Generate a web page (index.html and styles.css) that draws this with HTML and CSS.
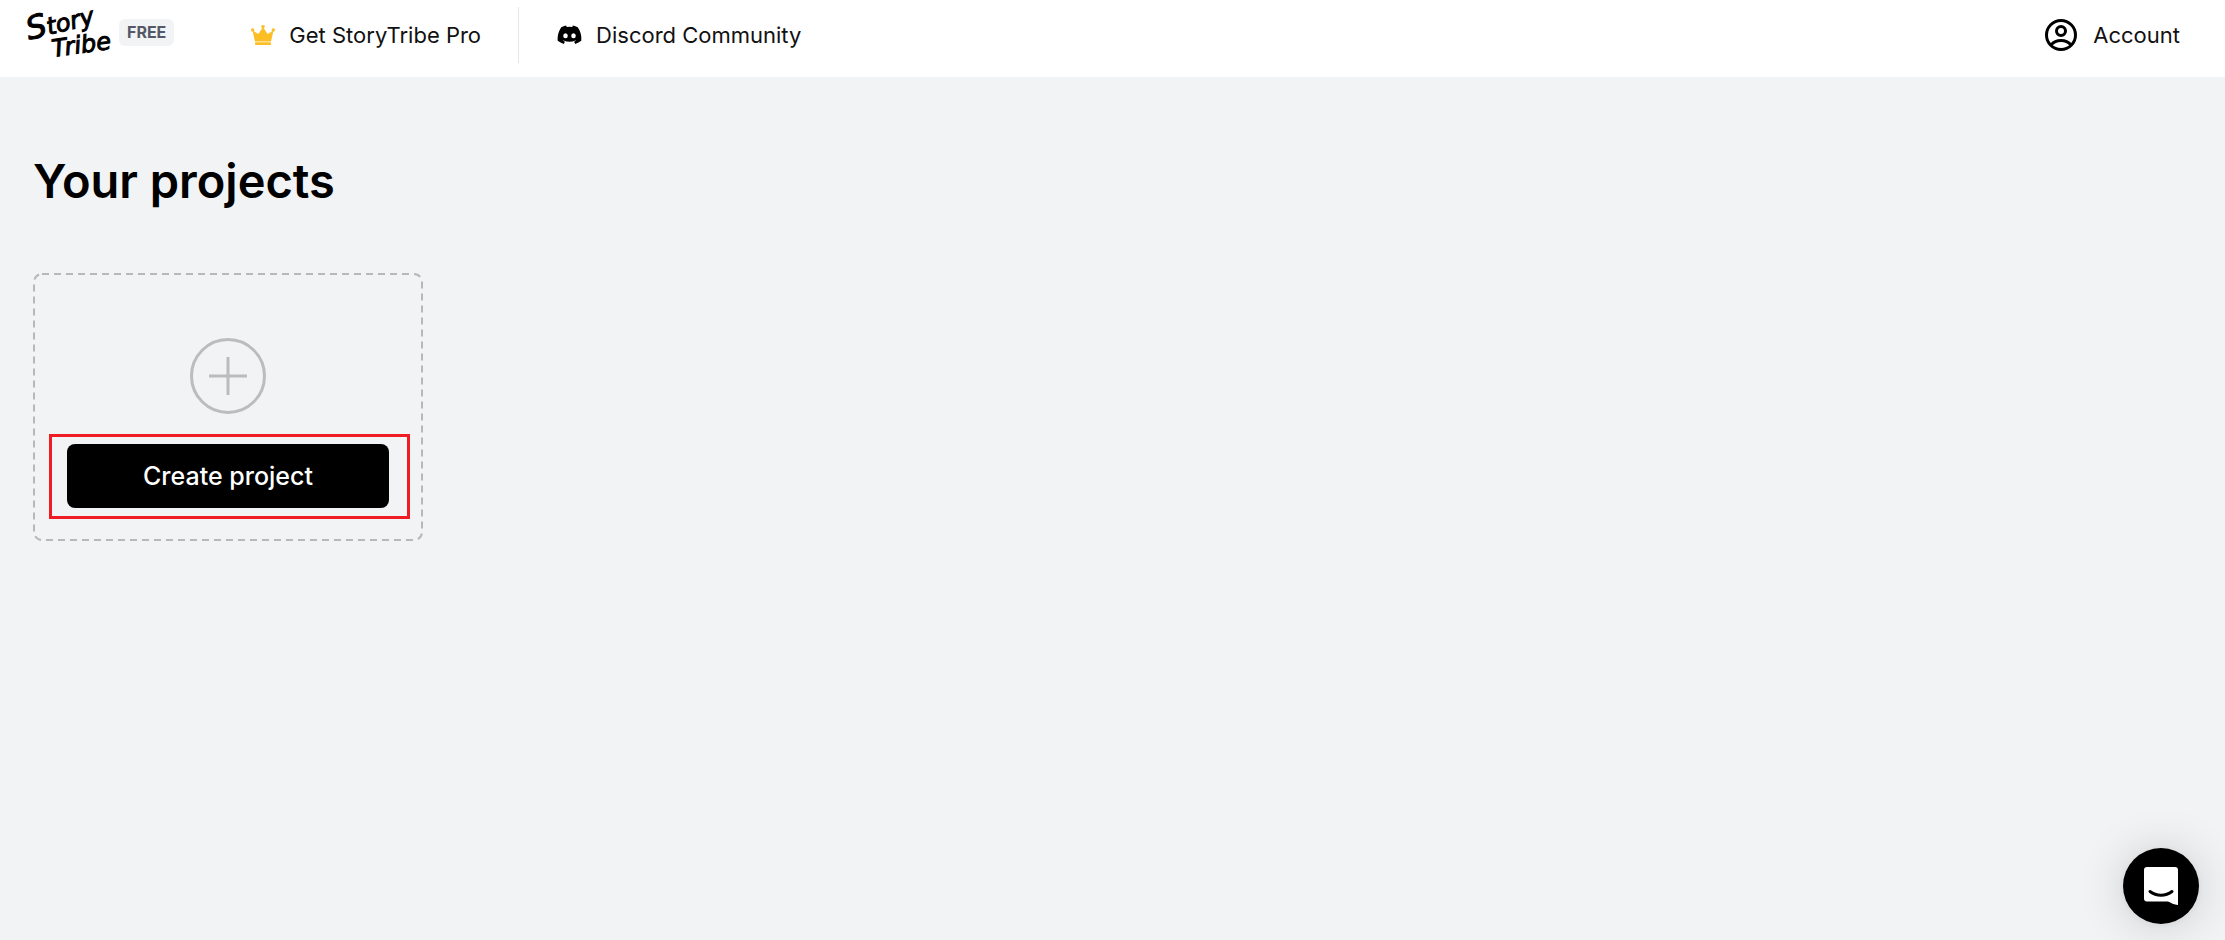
FILE: index.html
```html
<!DOCTYPE html>
<html lang="en">
<head>
<meta charset="utf-8">
<meta name="viewport" content="width=device-width, initial-scale=1">
<title>StoryTribe</title>
<link rel="stylesheet" href="styles.css">
</head>
<body>
<header class="topbar">
  <a class="brand" href="#" aria-label="Story Tribe">
    <svg class="logo" viewBox="0 0 88 56" aria-hidden="true">
      <text class="logo-word" transform="translate(3 33) rotate(-14)"><tspan class="logo-cap">S</tspan>tory</text>
      <text class="logo-word" transform="translate(27 50) rotate(-8)">Tribe</text>
    </svg>
  </a>
  <span class="badge">FREE</span>
  <nav class="links">
    <a class="link" href="#">
      <svg class="crown" viewBox="0 0 24 20" aria-hidden="true">
        <path d="M4 16.500 1.500 5.500 7.400 9 12 2 16.600 9 22.500 5.500 20 16.500Z"/>
        <circle cx="1.700" cy="5" r="1.700"/><circle cx="12" cy="1.800" r="1.800"/><circle cx="22.300" cy="5" r="1.700"/>
        <rect x="4" y="17.200" width="16" height="2.800" rx="1"/>
      </svg>
      Get StoryTribe Pro
    </a>
    <a class="link link-divided" href="#">
      <svg class="discord" viewBox="0 0 24 20" aria-hidden="true">
        <path fill-rule="evenodd" d="M20.300 2.200A19 19 0 0 0 15.400.600L14.700 2a18 18 0 0 0-5.400 0L8.600.600A19 19 0 0 0 3.700 2.200C.700 6.800-.2 11.300.200 15.800a20 20 0 0 0 6 3.100l1.300-2.200-2-.9.500-.4a14 14 0 0 0 12 0l.5.400-2 .9 1.300 2.200a20 20 0 0 0 6-3.100c.500-5.200-.9-9.700-3.500-13.600ZM8 13.200a2.300 2.500 0 1 1 0-5 2.300 2.500 0 0 1 0 5Zm8 0a2.300 2.500 0 1 1 0-5 2.300 2.500 0 0 1 0 5Z"/>
      </svg>
      Discord Community
    </a>
  </nav>
  <a class="link account" href="#">
    <svg class="user" viewBox="0 0 32 32" aria-hidden="true">
      <circle cx="16" cy="16" r="14.500"/>
      <circle cx="16" cy="12" r="4.500"/>
      <path d="M6 26c2.500-3 6-4.500 10-4.500s7.500 1.500 10 4.500"/>
    </svg>
    Account
  </a>
</header>
<main class="content">
  <h1 class="title">Your projects</h1>
  <section class="card">
    <svg class="card-frame" aria-hidden="true"><rect class="card-line" width="100%" height="100%" rx="8"/></svg>
    <svg class="plus" viewBox="0 0 76 76" aria-hidden="true">
      <circle cx="38" cy="38" r="36.500"/>
      <path d="M38 19v38M19 38h38"/>
    </svg>
    <div class="highlight">
      <button class="create" type="button">Create project</button>
    </div>
  </section>
</main>
<button class="chat" type="button" aria-label="Open chat">
  <svg class="chat-icon" viewBox="0 0 34 38" aria-hidden="true">
    <path class="chat-bubble" d="M3 0h28a3 3 0 0 1 3 3v35c-4-.5-7-2-10-3.500H3a3 3 0 0 1-3-3V3a3 3 0 0 1 3-3Z"/>
    <path class="chat-smile" d="M6 24.500c6.500 5 15.500 5 22 0"/>
  </svg>
</button>
</body>
</html>
```
FILE: styles.css
```css
* { box-sizing: border-box; }
body {
  margin: 0;
  min-height: 100vh;
  background: #f2f3f5;
  color: #000;
  font-family: Inter, "Liberation Sans", sans-serif;
}
a { color: inherit; text-decoration: none; }
button { font: inherit; border: 0; cursor: pointer; }

.topbar {
  display: flex;
  align-items: center;
  min-height: 77px;
  padding: 0 45px 8px 26px;
  background: #fff;
}
.brand { display: flex; }
.logo { width: 88px; height: 56px; overflow: visible; }
.logo-word {
  stroke: #000;
  stroke-width: 1;
  font-family: "DejaVu Sans", sans-serif;
  font-size: 24px;
  font-style: italic;
}
.logo-cap { font-size: 32px; }
.badge {
  margin: 0 77px 4px 5px;
  padding: 0 8px;
  border-radius: 6px;
  background: #f2f3f5;
  color: #555866;
  font-size: 16px;
  font-weight: 700;
  line-height: 27px;
}
.links { display: flex; }
.link {
  display: flex;
  align-items: center;
  gap: 14px;
  min-height: 56px;
  color: #111;
  font-size: 22px;
  line-height: 28px;
}
.link-divided {
  margin-left: 37px;
  padding-left: 38px;
  border-left: 1px solid #e5e7ea;
}
.crown { width: 24px; height: 20px; fill: #fbbe24; }
.discord { width: 25px; height: 20px; }
.account { gap: 16px; margin-left: auto; }
.user { width: 32px; height: 32px; fill: none; stroke: #000; stroke-width: 3; }

.content { padding: 75px 33px 32px; }
.title {
  margin: 0;
  font-size: 47px;
  font-weight: 600;
  line-height: 58px;
}
.card {
  position: relative;
  display: flex;
  flex-direction: column;
  align-items: center;
  width: 390px;
  margin-top: 63px;
  padding: 65px 13px 22px 16px;
}
.card-frame {
  position: absolute;
  inset: 1px;
  width: calc(100% - 2px);
  height: calc(100% - 2px);
  overflow: visible;
}
.card-line { fill: none; stroke: #b8b8b8; stroke-width: 2; stroke-dasharray: 7 5; }
.plus {
  width: 76px;
  height: 76px;
  margin-right: 3px;
  fill: none;
  stroke: #bcbcbc;
  stroke-width: 3;
}
.highlight {
  width: 100%;
  margin-top: 20px;
  padding: 7px 18px 8px 15px;
  border: 3px solid #f01c24;
}
.create {
  width: 100%;
  min-height: 64px;
  border-radius: 8px;
  background: #000;
  color: #fff;
  font-size: 25px;
  font-weight: 500;
}
.chat {
  position: fixed;
  right: 26px;
  bottom: 16px;
  display: grid;
  place-items: center;
  width: 76px;
  height: 76px;
  padding: 0;
  border-radius: 50%;
  background: #000;
  box-shadow: 0 2px 48px rgba(0, 0, 0, .16), 0 1px 8px rgba(0, 0, 0, .06);
}
.chat-icon { width: 34px; height: 38px; }
.chat-bubble { fill: #fff; }
.chat-smile { fill: none; stroke: #000; stroke-width: 3; stroke-linecap: round; }
```
